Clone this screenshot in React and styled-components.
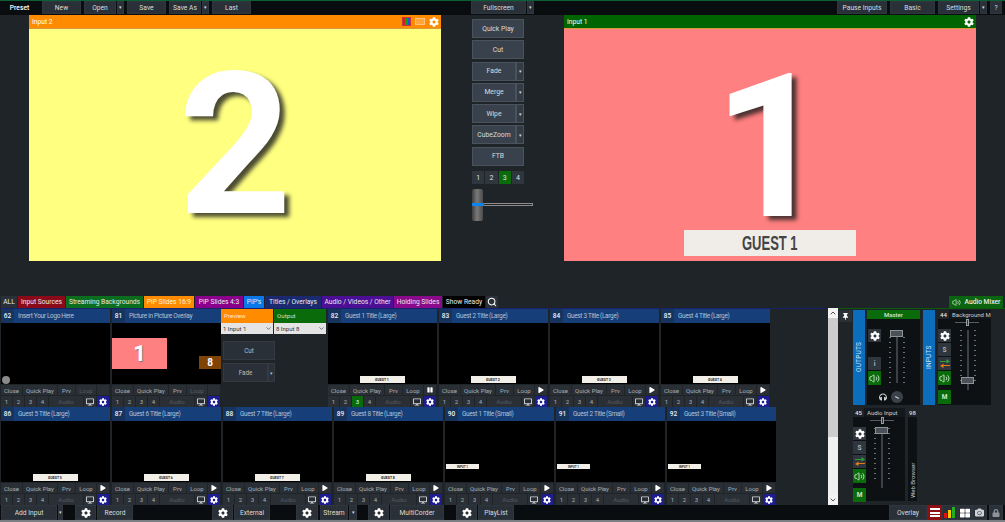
import React from 'react';
import styled, { createGlobalStyle } from 'styled-components';
import { FaCog, FaThumbtack, FaHeadphones, FaPlay, FaPause, FaLock, FaDesktop, FaCamera, FaThLarge } from 'react-icons/fa';
import { Volume2, Search, ChevronDown, ChevronUp } from 'lucide-react';

const Global = createGlobalStyle`
  html, body { margin: 0; padding: 0; width: 1005px; height: 522px; overflow: hidden; background: #1f2428; }
  * { box-sizing: border-box; }
  #root { font-family: Roboto, "Liberation Sans", sans-serif; font-size: 7px; color: #d5d9dd; }
`;

const Page = styled.div`
  width: 1005px; height: 522px; display: flex; flex-direction: column; background: #1f2428; overflow: hidden;
`;
const Bar = styled.div`
  height: ${p => p.$h}px; flex: none; display: flex; align-items: stretch; gap: ${p => p.$gap ?? 0}px; background: #0a0d10;
`;
const TopBarWrap = styled(Bar)`
  border-top: 1px solid #0a5f34; padding-bottom: 1px;
`;
const BottomBarWrap = styled(Bar)`
  border-bottom: 2px solid #7c8084; padding-left: 1px;
`;
const Spacer = styled.div`
  flex: ${p => (p.$w ? 'none' : 1)}; width: ${p => p.$w || 0}px;
`;
const Btn = styled.div`
  width: ${p => p.$w}px; flex: none; display: flex; align-items: center; justify-content: center;
  background: ${p => p.$bg || '#2a3037'}; border: 1px solid #30363d; color: #d8dcdf; font-size: 6.7px; white-space: nowrap;
`;
const Plain = styled(Btn)`
  background: transparent; border: none; color: #fff; font-weight: 500;
`;
const Group = styled.div`
  display: flex; gap: ${p => p.$gap ?? 1}px; flex: none;
`;
const Arrow = styled(Btn)`
  font-size: 5px; padding-bottom: 1px;
`;

const Stage = styled.div`
  height: 281px; flex: none; display: flex; align-items: flex-start; padding-left: 29px; gap: 31px;
`;
const Monitor = styled.div`
  width: 412px; height: 246px; flex: none; display: flex; flex-direction: column; position: relative;
`;
const MonitorHead = styled.div`
  height: 14px; flex: none; display: flex; align-items: center; gap: 3px; padding: 0 2px 0 3px;
  background: ${p => p.$bg}; border-bottom: 1px solid #d79a3c; color: #fff; font-size: 6.7px;
`;
const MonitorTitle = styled.span`
  flex: 1;
`;
const MonitorBody = styled.div`
  flex: 1; display: flex; align-items: center; justify-content: center; background: ${p => p.$bg};
`;
const BigDigit = styled.div`
  font-family: Roboto, "Liberation Sans", sans-serif; font-weight: 700; color: #fff;
  height: 150px; line-height: 150px;
  font-size: ${p => p.$size}px; text-shadow: 5px 4px 4px rgba(30,30,30,.8); margin-left: ${p => p.$ml || 0}px; margin-top: ${p => p.$mt || 0}px;
`;
const LowerThird = styled.div`
  position: absolute; left: 120px; top: 215px; width: 172px; height: 26px; background: #f0ede8;
  display: flex; align-items: center; justify-content: center;
`;
const LowerText = styled.span`
  font-family: "Liberation Sans", sans-serif; font-weight: 700; font-size: 20px; color: #444;
  display: inline-block; transform: scaleX(.65); white-space: nowrap;
`;
const RgbIcon = styled.div`
  width: 9px; height: 9px; display: flex; border: 1px solid #c33;
`;
const RgbBar = styled.div`
  flex: 1; background: ${p => p.$c};
`;
const FrameIcon = styled.div`
  width: 10px; height: 7px; border: 1px solid #ffc27a; background: #ffa63c; margin: 0 1px;
`;

const Center = styled.div`
  width: 61px; flex: none; padding-top: 4px; display: flex; flex-direction: column; gap: 2.3px;
`;
const CenterRow = styled.div`
  width: 52px; height: 19px; display: flex;
`;
const CenterBtn = styled(Btn)`
  flex: 1; width: auto; background: #39424c; border-color: #4a535c; font-size: 6.8px;
`;
const CenterArrow = styled(CenterBtn)`
  flex: none; width: 8px; background: #333b44; font-size: 5px;
`;
const Numbers = styled.div`
  display: flex; width: 52px; height: 13px; margin-top: 3px;
`;
const NumBtn = styled.div`
  flex: 1; margin-right: ${p => (p.$last ? 0 : 1)}px; display: flex; align-items: center; justify-content: center; color: #dfe3e6; font-size: 7px;
  background: ${p => (p.$on ? '#0a6b0a' : '#2f363e')};
`;
const TBar = styled.div`
  position: relative; height: 32px; width: 61px; margin-top: 3px;
`;
const TTrack = styled.div`
  position: absolute; left: 0; top: 14px; width: 61px; height: 3px; border: 1px solid #8a8c8f; background: #222;
`;
const TFill = styled.div`
  position: absolute; left: 0; top: 14px; width: 12px; height: 3px; background: #0b84ee;
`;
const THandle = styled.div`
  position: absolute; left: 0; top: 0; width: 11px; height: 32px; border-radius: 2px;
  background: linear-gradient(90deg, #3e3e3e, #7a7a7a 45%, #4a4a4a);
`;

const TabBar = styled.div`
  height: 12px; flex: none; display: flex; align-items: stretch; padding-left: 1px; gap: 1px;
`;
const Tab = styled.div`
  width: ${p => p.$w}px; flex: none; display: flex; align-items: center; justify-content: center;
  background: ${p => p.$bg}; color: ${p => p.$c || '#e9e9e9'}; font-size: 6.7px; white-space: nowrap;
`;
const MixerTab = styled.div`
  width: 54px; flex: none; margin-right: 2px; display: flex; align-items: center; justify-content: center; gap: 4px; background: #0a6410; color: #eaeaea; font-size: 6.7px; font-weight: 500;
`;

const Content = styled.div`
  height: 197px; flex: none; display: flex;
`;
const InputsArea = styled.div`
  width: 828px; flex: none; border-top: 1px solid #16206b; display: flex; flex-direction: column; padding-left: 1px;
`;
const CardRow = styled.div`
  height: 98px; display: flex; flex: none;
`;
const Cell = styled.div`
  width: ${p => (p.$tight ? 109 : 111)}px; flex: none; padding-right: ${p => (p.$tight ? 0 : 2)}px; display: flex; flex-direction: column;
`;
const CardTitle = styled.div`
  height: 14px; flex: none; display: flex; background: #163f7a; color: #b4c1d2; font-size: 6.4px; letter-spacing: -.3px; align-items: stretch;
`;
const CardNum = styled.div`
  width: 13px; display: flex; align-items: center; justify-content: center; background: #17345f; color: #eef1f4; font-weight: 500; font-size: 6.5px; letter-spacing: 0;
`;
const CardName = styled.div`
  flex: 1; display: flex; align-items: center; padding-left: 4px; white-space: nowrap; overflow: hidden;
`;
const Thumb = styled.div`
  height: 61px; flex: none; background: #000; position: relative; overflow: hidden;
`;
const GuestBar = styled.div`
  position: absolute; left: 50%; bottom: 1px; margin-left: -23px; width: 45px; height: 7px; background: #f2efe9; color: #222;
  display: flex; align-items: center; justify-content: center; font-size: 3.5px; font-weight: 700;
`;
const SmallBar = styled.div`
  position: absolute; left: 1px; top: 43px; width: 33px; height: 5px; background: #f2efe9; color: #222;
  display: flex; align-items: center; justify-content: center; font-size: 3px; font-weight: 700;
`;
const PipMain = styled.div`
  position: absolute; left: 0; top: 15px; width: 55px; height: 31px; background: #ff8080; color: #fff;
  display: flex; align-items: center; justify-content: center; font: 700 22px Roboto, sans-serif; text-shadow: 1px 1px 1px #777;
`;
const PipSmall = styled.div`
  position: absolute; right: 0; top: 33px; width: 22px; height: 13px; background: #7f4405; color: #fff;
  display: flex; align-items: center; justify-content: center; font: 700 10px Roboto, sans-serif;
`;
const Logo = styled.div`
  position: absolute; left: 1px; bottom: 0; width: 8px; height: 8px; border-radius: 50%; background: #8a8a8a;
`;
const CtlRow = styled.div`
  height: ${p => p.$h}px; margin-top: 1px; flex: none; display: grid; grid-template-columns: ${p => p.$cols}; gap: 1px;
`;
const Ctl = styled.div`
  display: flex; align-items: center; justify-content: center; font-size: 6px; white-space: nowrap; overflow: hidden;
  background: ${p => p.$bg || '#2a2f35'}; color: ${p => p.$c || '#a8afb5'};
`;

const Panel = styled.div`
  width: 107px; flex: none; padding-right: 2px; display: flex; flex-direction: column;
`;
const PanelHeads = styled.div`
  display: flex; height: 14px; gap: 1px; flex: none;
`;
const PanelHead = styled.div`
  flex: 1; display: flex; align-items: center; padding-left: 3px; background: ${p => p.$bg}; color: ${p => p.$c}; font-size: 6.2px;
`;
const Selects = styled.div`
  display: flex; height: 11px; gap: 1px; flex: none;
`;
const Select = styled.div`
  flex: 1; display: flex; align-items: center; justify-content: space-between; padding: 0 1px 0 2px; background: #e4e4e4; color: #333; font-size: 6px;
`;
const PanelBtns = styled.div`
  width: 52px; margin: 7px 0 0 2px; display: flex; flex-direction: column; gap: 3px;
`;
const PanelRow = styled.div`
  display: flex; height: 19px;
`;
const PanelBtn = styled(Btn)`
  flex: 1; width: auto; background: #2a3037; border-color: #343a41; color: #b5bbc0; font-size: 6.3px;
`;
const PanelArrow = styled(PanelBtn)`
  flex: none; width: 7px; font-size: 5px;
`;

const Scroll = styled.div`
  width: 10px; flex: none; display: flex; flex-direction: column; background: #f0f0f0;
`;
const ScrollEnd = styled.div`
  height: 10px; flex: none; display: flex; align-items: center; justify-content: center; background: #f3f3f3; color: #555;
`;
const ScrollThumb = styled.div`
  height: 119px; flex: none; background: #cdcdcd;
`;
const ScrollRest = styled.div`
  flex: 1;
`;

const Audio = styled.div`
  flex: 1; border-top: 1px solid #0a5a0a; display: flex; flex-direction: column; padding: 1px 0 0 1px; gap: 3px;
`;
const AudioRow = styled.div`
  display: flex; height: ${p => p.$h}px; flex: none; align-items: flex-start; padding-left: ${p => p.$pl || 0}px;
`;
const Pin = styled.div`
  width: 13px; height: 12px; flex: none; margin-right: 1px; display: flex; align-items: center; justify-content: center; background: #2a3037; color: #fff;
`;
const Strip = styled.div`
  width: 12px; height: 95px; flex: none; margin-right: ${p => p.$mr}px; background: #0b6dbb; color: #cfe2f2; font-size: 6.5px;
  writing-mode: vertical-rl; transform: rotate(180deg); display: flex; align-items: center; justify-content: center; letter-spacing: .2px;
`;
const MasterWrap = styled.div`
  width: 53px; height: 95px; flex: none; margin-right: 3px; display: flex; flex-direction: column; background: #0e1114;
`;
const MasterHead = styled.div`
  height: 9px; flex: none; background: #0a6b0a; color: #d8e8d8; font-size: 6px; font-weight: 500; display: flex; align-items: center; justify-content: center;
`;
const ChannelWrap = styled.div`
  width: ${p => p.$w}px; height: ${p => p.$h}px; flex: none; display: flex; flex-direction: column; background: #0e1114; margin-right: ${p => p.$mr || 0}px;
`;
const ChannelHead = styled.div`
  height: 9px; flex: none; display: flex; background: #14181c; overflow: hidden; white-space: nowrap; font-size: 6px; color: #c9ced2;
`;
const ChannelNum = styled.div`
  width: 11px; flex: none; display: flex; align-items: center; justify-content: center; color: #e6e6e6; background: #1f2428; font-weight: 500;
`;
const ChannelName = styled.div`
  padding-left: 3px; display: flex; align-items: center;
`;
const ChannelBody = styled.div`
  flex: 1; position: relative;
`;
const SideBtn = styled.div`
  position: absolute; left: ${p => p.$x}px; top: ${p => p.$y}px; width: 13px; height: ${p => p.$h || 13}px;
  display: flex; align-items: center; justify-content: center; background: ${p => p.$bg || '#2f363e'}; color: ${p => p.$c || '#fff'}; font-size: 6.5px; font-weight: 700;
`;
const FaderLine = styled.div`
  position: absolute; left: ${p => p.$x}px; top: ${p => p.$y}px; width: 2px; height: ${p => p.$h}px; background: #3b4147;
`;
const Ticks = styled.div`
  position: absolute; left: ${p => p.$x}px; top: ${p => p.$y}px; width: 2px; height: ${p => p.$h}px;
  background: repeating-linear-gradient(180deg, #6b7177 0 1px, transparent 1px 5px);
`;
const Knob = styled.div`
  position: absolute; left: ${p => p.$x}px; top: ${p => p.$y}px; width: 13px; height: 7px; border: 1px solid #8c9298; background: #4a5158;
`;
const PanLine = styled.div`
  position: absolute; left: ${p => p.$x}px; top: 3px; width: 24px; height: 1px; background: #565c62;
`;
const PanKnob = styled.div`
  position: absolute; left: ${p => p.$x + 11}px; top: 0; width: 3px; height: 7px; border: 1px solid #9a9fa4; background: #333;
`;
const RoundBtn = styled.div`
  position: absolute; left: 24px; top: 72px; width: 12px; height: 12px; border-radius: 50%; background: #3a4148; display: flex; align-items: center; justify-content: center;
`;
const RoundMark = styled.div`
  width: 4px; height: 1px; background: #d0d0d0; transform: rotate(30deg);
`;
const PhoneIcon = styled.div`
  position: absolute; left: 12px; top: 74px; color: #c8cdd2; display: flex;
`;
const WebStrip = styled.div`
  width: 9px; height: 93px; flex: none; background: #0e1114; display: flex; flex-direction: column;
`;
const WebNum = styled.div`
  height: 9px; display: flex; align-items: center; justify-content: center; background: #1f2428; color: #d8d8d8; font-size: 6px; font-weight: 500;
`;
const WebLabel = styled.div`
  flex: 1; writing-mode: vertical-rl; transform: rotate(180deg); display: flex; align-items: flex-start; justify-content: flex-start; color: #c4c9cd; font-size: 6px; padding: 3px 1px 0 0;
`;
const GearBtn = styled(Btn)`
  color: #fff; background: #2a3037;
`;
const MenuRed = styled(Btn)`
  background: #8c0f14; border: none; flex-direction: column; gap: 1.5px;
`;
const MenuLine = styled.div`
  width: 10px; height: 2px; background: #fff;
`;

const Swap = () => (
  <svg width="10" height="9" viewBox="0 0 10 9">
    <path d="M0 2h6.5V0L10 2.5 6.5 4.5V3H0z" fill="#2e9e3a" />
    <path d="M10 6H3.5V4.5L0 7 3.5 9V7H10z" fill="#e87a14" />
  </svg>
);
const Meter = () => (
  <svg width="12" height="11" viewBox="0 0 12 11">
    <rect x="0" y="6" width="3" height="5" fill="#e01010" />
    <rect x="4" y="3" width="3" height="8" fill="#f5c800" />
    <rect x="8" y="0" width="3" height="11" fill="#22b022" />
  </svg>
);
const Speaker = () => <Volume2 size={11} color="#cfe8cf" strokeWidth={2} />;

const CardCtl = ({ loop = true, play, active }) => (
  <>
    <CtlRow $h={10} $cols="21px 34px 17px 20px 12px">
      <Ctl>Close</Ctl><Ctl>Quick Play</Ctl><Ctl>Prv</Ctl>
      <Ctl $c={loop ? undefined : '#555b61'}>Loop</Ctl>
      <Ctl $c="#fff">{play === 'play' ? <FaPlay size={6} /> : play === 'pause' ? <FaPause size={6} /> : null}</Ctl>
    </CtlRow>
    <CtlRow $h={11} $cols="11px 11px 11px 11px 34px 12px 12px">
      {[1, 2, 3, 4].map(n => (
        <Ctl key={n} $bg={active === n ? '#0a6b0a' : undefined} $c={active === n ? '#dff' : undefined}>{n}</Ctl>
      ))}
      <Ctl $c="#555b61">Audio</Ctl>
      <Ctl $c="#d5d9dd"><FaDesktop size={8} /></Ctl>
      <Ctl $bg="#1d1d8f" $c="#fff"><FaCog size={8} /></Ctl>
    </CtlRow>
  </>
);

const Card = ({ num, name, tight, children, ...rest }) => (
  <Cell $tight={tight}>
    <CardTitle><CardNum>{num}</CardNum><CardName>{name}</CardName></CardTitle>
    <Thumb>{children}</Thumb>
    <CardCtl {...rest} />
  </Cell>
);

const Channel = ({ num, name, w, h, mr, offs }) => (
  <ChannelWrap $w={w} $h={h} $mr={mr}>
    <ChannelHead><ChannelNum>{num}</ChannelNum><ChannelName>{name}</ChannelName></ChannelHead>
    <ChannelBody>
      <PanLine $x={offs.pan} /><PanKnob $x={offs.pan} />
      <SideBtn $x={0} $y={10}><FaCog size={10} /></SideBtn>
      <SideBtn $x={0} $y={24} $c="#aeb5bb">S</SideBtn>
      <SideBtn $x={0} $y={38}><Swap /></SideBtn>
      <SideBtn $x={0} $y={52} $bg="#0a6b0a" $h={14}><Speaker /></SideBtn>
      <SideBtn $x={0} $y={71} $bg="#0a6b0a" $h={14} $c="#cfe8cf">M</SideBtn>
      <Ticks $x={offs.fader - 7} $y={11} $h={52} />
      <Ticks $x={offs.fader + 7} $y={11} $h={52} />
      <FaderLine $x={offs.fader} $y={11} $h={60} />
      <Knob $x={offs.fader - 6} $y={offs.knob} />
    </ChannelBody>
  </ChannelWrap>
);

const tabs = [
  ['ALL', 16, '#2a3037'], ['Input Sources', 47, '#8b0a1a'], ['Streaming Backgrounds', 77, '#0b6e1f'],
  ['PiP Slides 16:9', 50, '#ff8c00', '#fff3d8'], ['PiP Slides 4:3', 48, '#8b008b'], ["PiP's", 20, '#0a78e8'],
  ['Titles / Overlays', 56, '#1b2a6e'], ['Audio / Videos / Other', 71, '#4b0f96'], ['Holding Slides', 48, '#8b0a8b'], ['Show Ready', 42, '#000'],
];
const row1 = [[82, 'Guest 1 Title (Large)', 'GUEST 1'], [83, 'Guest 2 Title (Large)', 'GUEST 2'], [84, 'Guest 3 Title (Large)', 'GUEST 3'], [85, 'Guest 4 Title (Large)', 'GUEST 4']];
const row2 = [[86, 'Guest 5 Title (Large)', 'GUEST 5'], [87, 'Guest 6 Title (Large)', 'GUEST 6'], [88, 'Guest 7 Title (Large)', 'GUEST 7'], [89, 'Guest 8 Title (Large)', 'GUEST 8']];
const row2s = [[90, 'Guest 1 Title (Small)'], [91, 'Guest 2 Title (Small)'], [92, 'Guest 3 Title (Small)']];

export default function App() {
  return (
    <Page>
      <Global />
      <TopBarWrap $h={15} $gap={3}>
        <Plain $w={39}>Preset</Plain>
        <Btn $w={39}>New</Btn>
        <Group><Btn $w={32}>Open</Btn><Arrow $w={7}>▾</Arrow></Group>
        <Btn $w={39}>Save</Btn>
        <Group><Btn $w={32}>Save As</Btn><Arrow $w={7}>▾</Arrow></Group>
        <Btn $w={39}>Last</Btn>
        <Spacer $w={214} />
        <Group><Btn $w={55}>Fullscreen</Btn><Arrow $w={7}>▾</Arrow></Group>
        <Spacer />
        <Btn $w={50}>Pause Inputs</Btn>
        <Btn $w={45}>Basic</Btn>
        <Group><Btn $w={41}>Settings</Btn><Arrow $w={7}>▾</Arrow></Group>
        <Btn $w={12}>?</Btn>
        <Spacer $w={0.01} />
      </TopBarWrap>

      <Stage>
        <Monitor>
          <MonitorHead $bg="#ff8c00">
            <MonitorTitle>Input 2</MonitorTitle>
            <RgbIcon><RgbBar $c="#d02020" /><RgbBar $c="#10a010" /><RgbBar $c="#2050e0" /></RgbIcon>
            <FrameIcon />
            <FaCog size={10} color="#fff" />
          </MonitorHead>
          <MonitorBody $bg="#ffff80"><BigDigit $size={198}>2</BigDigit></MonitorBody>
        </Monitor>
        <Center>
          <CenterRow><CenterBtn>Quick Play</CenterBtn></CenterRow>
          <CenterRow><CenterBtn>Cut</CenterBtn></CenterRow>
          {['Fade', 'Merge', 'Wipe', 'CubeZoom'].map(t => (
            <CenterRow key={t}><CenterBtn>{t}</CenterBtn><CenterArrow>▾</CenterArrow></CenterRow>
          ))}
          <CenterRow><CenterBtn>FTB</CenterBtn></CenterRow>
          <Numbers>
            {[1, 2, 3, 4].map(n => <NumBtn key={n} $on={n === 3} $last={n === 4}>{n}</NumBtn>)}
          </Numbers>
          <TBar><TTrack /><THandle /><TFill /></TBar>
        </Center>
        <Monitor>
          <MonitorHead $bg="#006400">
            <MonitorTitle>Input 1</MonitorTitle>
            <FaCog size={10} color="#fff" />
          </MonitorHead>
          <MonitorBody $bg="#ff8080"><BigDigit $size={200} $ml={1} $mt={6}>1</BigDigit></MonitorBody>
          <LowerThird><LowerText>GUEST 1</LowerText></LowerThird>
        </Monitor>
      </Stage>

      <TabBar>
        {tabs.map(([t, w, bg, c]) => <Tab key={t} $w={w} $bg={bg} $c={c}>{t}</Tab>)}
        <Tab $w={12} $bg="#2a3037"><Search size={10} color="#fff" strokeWidth={2.5} /></Tab>
        <Spacer />
        <MixerTab><Volume2 size={9} color="#cfe8cf" />Audio Mixer</MixerTab>
      </TabBar>

      <Content>
        <InputsArea>
          <CardRow>
            <Card num={62} name="Insert Your Logo Here" loop={false}><Logo /></Card>
            <Card num={81} name="Picture in Picture Overlay" tight loop={false}>
              <PipMain>1</PipMain><PipSmall>8</PipSmall>
            </Card>
            <Panel>
              <PanelHeads>
                <PanelHead $bg="#ff8c00" $c="#ffe9c8">Preview</PanelHead>
                <PanelHead $bg="#0a6b0a" $c="#c8e0c8">Output</PanelHead>
              </PanelHeads>
              <Selects>
                <Select>1 Input 1<ChevronDown size={7} /></Select>
                <Select>8 Input 8<ChevronDown size={7} /></Select>
              </Selects>
              <PanelBtns>
                <PanelRow><PanelBtn>Cut</PanelBtn></PanelRow>
                <PanelRow><PanelBtn>Fade</PanelBtn><PanelArrow>▾</PanelArrow></PanelRow>
              </PanelBtns>
            </Panel>
            {row1.map(([n, t, g], i) => (
              <Card key={n} num={n} name={t} play={i === 0 ? 'pause' : 'play'} active={i === 0 ? 3 : undefined}>
                <GuestBar>{g}</GuestBar>
              </Card>
            ))}
          </CardRow>
          <CardRow>
            {row2.map(([n, t, g]) => (
              <Card key={n} num={n} name={t} play="play"><GuestBar>{g}</GuestBar></Card>
            ))}
            {row2s.map(([n, t]) => (
              <Card key={n} num={n} name={t} play="play"><SmallBar>INPUT 1</SmallBar></Card>
            ))}
          </CardRow>
        </InputsArea>

        <Scroll>
          <ScrollEnd><ChevronUp size={8} strokeWidth={3} /></ScrollEnd>
          <ScrollThumb />
          <ScrollRest />
          <ScrollEnd><ChevronDown size={8} strokeWidth={3} /></ScrollEnd>
        </Scroll>

        <Audio>
          <AudioRow $h={95}>
            <Pin><FaThumbtack size={7} /></Pin>
            <Strip $mr={2}>OUTPUTS</Strip>
            <MasterWrap>
              <MasterHead>Master</MasterHead>
              <ChannelBody>
                <SideBtn $x={1} $y={10}><FaCog size={10} /></SideBtn>
                <SideBtn $x={1} $y={38} $c="#aeb5bb">i</SideBtn>
                <SideBtn $x={1} $y={52} $bg="#0a6b0a" $h={14}><Speaker /></SideBtn>
                <Ticks $x={22} $y={18} $h={48} />
                <Ticks $x={36} $y={18} $h={48} />
                <FaderLine $x={29} $y={14} $h={50} />
                <Knob $x={23} $y={11} />
                <PhoneIcon><FaHeadphones size={8} /></PhoneIcon>
                <RoundBtn><RoundMark /></RoundBtn>
              </ChannelBody>
            </MasterWrap>
            <Strip $mr={3}>INPUTS</Strip>
            <Channel num={44} name="Background M" w={53} h={95} offs={{ pan: 17, fader: 29, knob: 58 }} />
          </AudioRow>
          <AudioRow $h={93} $pl={14}>
            <Channel num={45} name="Audio Input" w={52} h={93} mr={3} offs={{ pan: 17, fader: 28, knob: 10 }} />
            <WebStrip><WebNum>98</WebNum><WebLabel>Web Browser</WebLabel></WebStrip>
          </AudioRow>
        </Audio>
      </Content>

      <BottomBarWrap $h={17}>
        <Group><Btn $w={56}>Add Input</Btn><Arrow $w={5}>▾</Arrow></Group>
        <Spacer $w={12} />
        <GearBtn $w={21}><FaCog size={10} /></GearBtn>
        <Spacer $w={1} />
        <Btn $w={36}>Record</Btn>
        <Spacer $w={79} />
        <GearBtn $w={21}><FaCog size={10} /></GearBtn>
        <Spacer $w={1} />
        <Btn $w={36}>External</Btn>
        <Spacer $w={26} />
        <GearBtn $w={22}><FaCog size={10} /></GearBtn>
        <Spacer $w={2} />
        <Group><Btn $w={28}>Stream</Btn><Arrow $w={8}>▾</Arrow></Group>
        <Spacer $w={11} />
        <GearBtn $w={21}><FaCog size={10} /></GearBtn>
        <Spacer $w={1} />
        <Btn $w={54}>MultiCorder</Btn>
        <Spacer $w={12} />
        <GearBtn $w={21}><FaCog size={10} /></GearBtn>
        <Spacer $w={1} />
        <Btn $w={36}>PlayList</Btn>
        <Spacer />
        <Btn $w={38}>Overlay</Btn>
        <MenuRed $w={15}><MenuLine /><MenuLine /><MenuLine /></MenuRed>
        <Btn $w={16}><Meter /></Btn>
        <Btn $w={14}><FaThLarge size={10} color="#fff" /></Btn>
        <Btn $w={15}><FaCamera size={9} color="#cfd3d7" /></Btn>
        <Spacer $w={2} />
        <Btn $w={14}><FaLock size={8} color="#8e9398" /></Btn>
        <Spacer $w={2} />
      </BottomBarWrap>
    </Page>
  );
}
